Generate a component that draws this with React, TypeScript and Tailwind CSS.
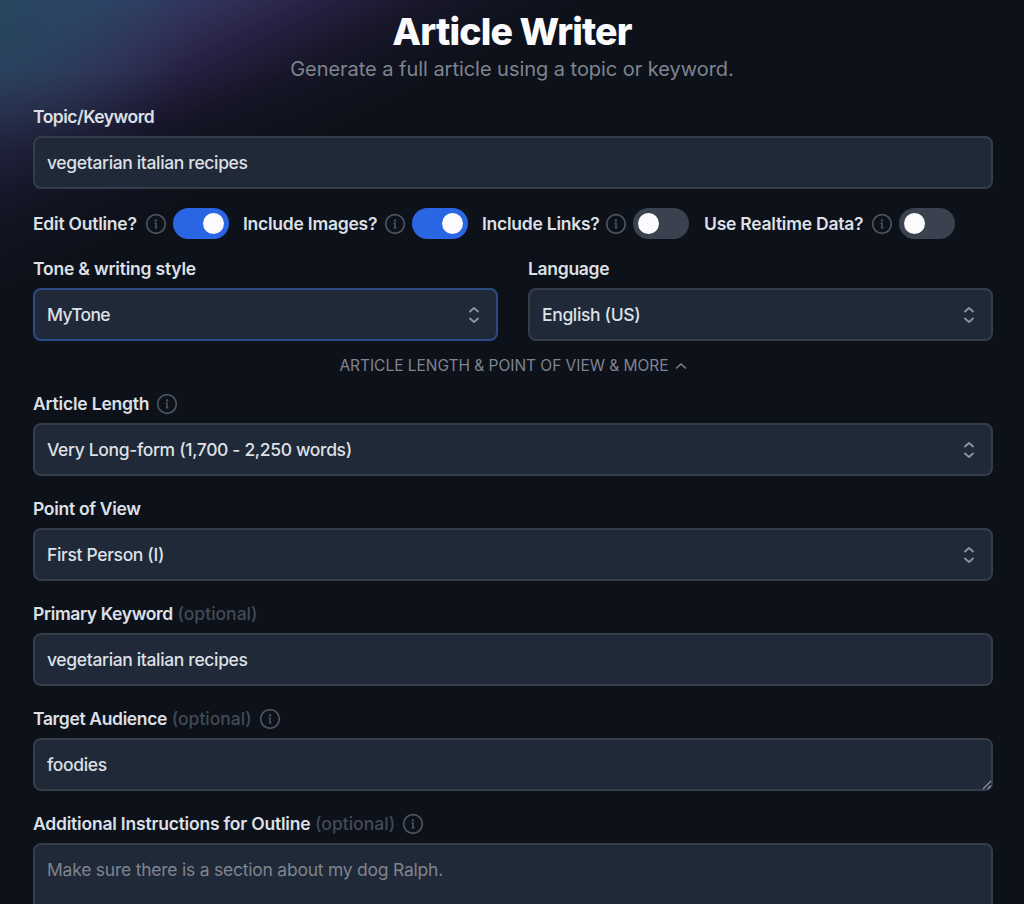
import type { ReactNode } from "react";
import clsx from "clsx";

const toggles = [
  { id: "outline", label: "Edit Outline?", on: true, width: "w-[210px]", text: "w-[112px]" },
  { id: "images", label: "Include Images?", on: true, width: "w-[239px]", text: "w-[141px]" },
  { id: "links", label: "Include Links?", on: false, width: "w-[222px]", text: "w-[123px]" },
  { id: "realtime", label: "Use Realtime Data?", on: false, width: "w-[252px]", text: "w-[167px]" },
];

function InfoIcon() {
  return (
    <svg className="block w-[22px] h-[22px] shrink-0 text-[#4d545f]" viewBox="0 0 22 22" fill="none" stroke="currentColor">
      <circle cx="11" cy="11" r="9.3" strokeWidth="1.7" />
      <circle cx="11" cy="7.4" r="1.2" fill="currentColor" stroke="none" />
      <path d="M9.5 10.2H11v4.6M9.8 14.8h2.6" strokeWidth="1.6" />
    </svg>
  );
}

interface LabelProps {
  children: ReactNode;
  optional?: boolean;
  info?: boolean;
  tracking?: string;
}

function Label({ children, optional, info, tracking = "tracking-[-0.2px]" }: LabelProps) {
  return (
    <div className="flex items-center h-[25px] mb-[7px] whitespace-pre">
      <span className={clsx("font-semibold text-[#dde0e6]", tracking)}>{children}</span>
      {optional && <span className="font-medium text-[#434a57]"> (optional)</span>}
      {info && (
        <span className="ml-[7px]">
          <InfoIcon />
        </span>
      )}
    </div>
  );
}

const boxClass =
  "w-full h-[53px] rounded-[8px] border-2 bg-[#1f2937] px-[12px] text-[#dde0e6] font-medium";

function TextInput({ value }: { value: string }) {
  return (
    <input
      className={clsx(boxClass, "block border-[#353d49] tracking-[-0.35px] outline-none")}
      defaultValue={value}
    />
  );
}

function Select({ value, focused }: { value: string; focused?: boolean }) {
  return (
    <button
      className={clsx(
        boxClass,
        "flex items-center justify-between text-left",
        focused ? "border-[#2d4b87] tracking-[-0.7px]" : "border-[#353d49] tracking-[-0.35px]"
      )}
    >
      <span>{value}</span>
      <svg className="w-[12px] h-[18px] mr-[4px] text-[#8d929c]" viewBox="0 0 12 18" fill="none" stroke="currentColor" strokeWidth="1.9" strokeLinecap="round" strokeLinejoin="round">
        <path d="M2 5.5 6 2l4 3.5M2 12.5 6 16l4-3.5" />
      </svg>
    </button>
  );
}

function Toggle({ on }: { on: boolean }) {
  return (
    <button
      className={clsx(
        "flex items-center w-[56px] h-[31px] rounded-full px-[5px]",
        on ? "justify-end bg-[#2a65e4]" : "justify-start bg-[#3a424f]"
      )}
    >
      <span className="w-[21px] h-[21px] rounded-full bg-[#fbfbfd]" />
    </button>
  );
}

export default function App() {
  return (
    <div className="w-[1024px] h-[904px] overflow-hidden bg-[#0d111a] bg-[linear-gradient(180deg,rgba(13,17,26,0)_70px,rgba(13,17,26,0.35)_150px),radial-gradient(ellipse_190px_150px_at_0px_40px,rgba(38,68,90,0.75),rgba(38,68,90,0)),linear-gradient(153.4deg,#2b4666_0px,#2f4268_50px,#312f57_105px,#251f40_150px,#171628_195px,#0d111a_260px)] font-['Inter',sans-serif] text-[17.5px] leading-[25px]">
      <header className="h-[104px] pt-[9px] text-center">
        <h1 className="text-[37.5px] leading-[45px] font-extrabold tracking-[-0.85px] text-[#fbfbfd]">Article Writer</h1>
        <p className="mt-[3px] text-[20px] leading-[25px] tracking-[-0.04px] text-[#7f848f]">Generate a full article using a topic or keyword.</p>
      </header>

      <main className="ml-[33px] w-[960px]">
        <Label tracking="tracking-[-0.5px]">Topic/Keyword</Label>
        <TextInput value="vegetarian italian recipes" />

        <div className="flex mt-[19px] mb-[17px] h-[31px]">
          {toggles.map((toggle) => (
            <div key={toggle.id} className={clsx("flex items-center shrink-0", toggle.width)}>
              <span className={clsx("shrink-0 whitespace-nowrap font-semibold tracking-[-0.24px] text-[#dde0e6]", toggle.text)}>
                {toggle.label}
              </span>
              <InfoIcon />
              <span className="ml-[6px]">
                <Toggle on={toggle.on} />
              </span>
            </div>
          ))}
        </div>

        <div className="grid grid-cols-2 gap-[30px]">
          <div>
            <Label>Tone &amp; writing style</Label>
            <Select value="MyTone" focused />
          </div>
          <div>
            <Label tracking="tracking-[-0.3px]">Language</Label>
            <Select value="English (US)" />
          </div>
        </div>

        <div className="flex items-center justify-center mt-[12px] mb-[13px] h-[25px] text-[#7f848f]">
          <span className="text-[15.5px] whitespace-nowrap tracking-[-0.03px]">ARTICLE LENGTH &amp; POINT OF VIEW &amp; MORE</span>
          <svg className="ml-[6px] w-[12px] h-[8px]" viewBox="0 0 12 8" fill="none" stroke="currentColor" strokeWidth="1.5">
            <path d="M1 6.5 6 2l5 4.5" />
          </svg>
        </div>

        <div className="flex flex-col gap-[20px]">
          <div>
            <Label info>Article Length</Label>
            <Select value="Very Long-form (1,700 - 2,250 words)" />
          </div>
          <div>
            <Label tracking="tracking-[-0.3px]">Point of View</Label>
            <Select value="First Person (I)" />
          </div>
          <div>
            <Label optional tracking="tracking-[-0.36px]">Primary Keyword</Label>
            <TextInput value="vegetarian italian recipes" />
          </div>
          <div>
            <Label optional info tracking="tracking-[-0.35px]">Target Audience</Label>
            <div className="relative">
              <TextInput value="foodies" />
              {/* resize grip */}
              <svg className="absolute right-[1px] bottom-[1px] w-[10px] h-[10px] text-[#8d94a0]" viewBox="0 0 10 10" stroke="currentColor" strokeWidth="1.2">
                <path d="M1 9 9 1M5.5 9 9 5.5" />
              </svg>
            </div>
          </div>
          <div>
            <Label optional info>Additional Instructions for Outline</Label>
            <textarea
              className="block w-full h-[100px] resize-none rounded-[8px] border-2 border-[#353d49] bg-[#1f2937] px-[12px] py-[12px] tracking-[-0.23px] placeholder:text-[#7f848f] outline-none"
              placeholder="Make sure there is a section about my dog Ralph."
            />
          </div>
        </div>
      </main>
    </div>
  );
}
